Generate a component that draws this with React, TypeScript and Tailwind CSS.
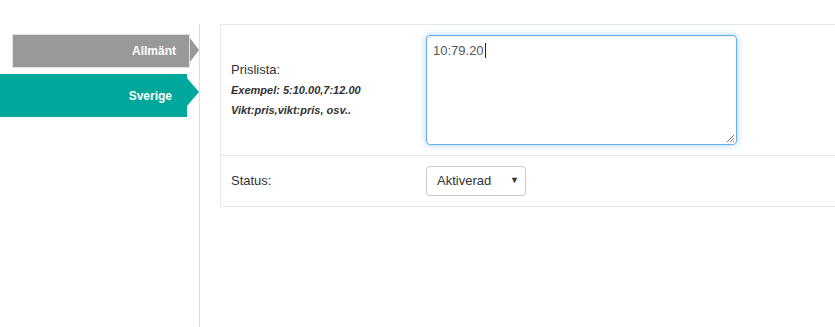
import React from "react"

function Tab({
  label,
  active,
}: {
  label: string
  active?: boolean
}) {
  if (active) {
    return (
      <div className="relative mt-[6px] flex h-[43px] w-[187px] items-center justify-end bg-[#00a89b] pr-[15px] text-[12px] font-bold text-white">
        {label}
        <span className="absolute top-[4px] left-[187px] h-0 w-0 border-y-[14px] border-l-[12px] border-y-transparent border-l-[#00a89b]" />
      </div>
    )
  }
  return (
    <div className="relative ml-[12px] flex h-[34px] w-[178px] items-center justify-end border border-[#e0e0e0] bg-[#999999] pr-[13px] text-[12px] font-bold text-white">
      {label}
      <span className="absolute top-[3px] left-[177px] h-0 w-0 border-y-[12px] border-l-[9px] border-y-transparent border-l-[#999999]" />
    </div>
  )
}

export default function App() {
  return (
    <div className="h-[327px] w-[835px] overflow-hidden bg-white font-['Liberation_Sans',Arial,sans-serif] text-[#333]">
      <div className="mt-[24px] flex h-[303px]">
        <div className="w-[200px] shrink-0 border-r border-[#dddddd] pt-[10px]">
          <Tab label="Allmänt" />
          <Tab label="Sverige" active />
        </div>

        <div className="ml-[20px] flex-1 self-start border-y border-l border-[#e7e7e7]">
          <div className="flex border-b border-[#e7e7e7]">
            <div className="flex w-[205px] shrink-0 flex-col justify-center pl-[10px]">
              <div className="text-[13px] leading-[20px]">Prislista:</div>
              <div className="text-[11px] leading-[20px] font-bold italic">
                Exempel: 5:10.00,7:12.00
              </div>
              <div className="text-[11px] leading-[20px] font-bold italic">
                Vikt:pris,vikt:pris, osv..
              </div>
            </div>
            <div className="py-[10px]">
              <div className="relative h-[110px] w-[311px] rounded-[4px] border border-[#66afe9] px-[6px] py-[4px] text-[13px] leading-[20px] text-[#555] shadow-[inset_0_1px_1px_rgba(0,0,0,0.075),0_0_6px_rgba(102,175,233,0.6)]">
                10:79.20
                <span className="ml-[1px] inline-block h-[15px] w-[1px] translate-y-[3px] bg-[#222]" />
                <svg
                  viewBox="0 0 10 10"
                  className="absolute right-[1px] bottom-[1px] h-[10px] w-[10px]"
                >
                  <path d="M9 2 L2 9 M9 5 L5 9 M9 8 L8 9" stroke="#777" strokeWidth="1" />
                </svg>
              </div>
            </div>
          </div>

          <div className="flex">
            <div className="flex w-[205px] shrink-0 items-center pl-[10px] text-[13px]">
              Status:
            </div>
            <div className="py-[10px]">
              <div className="flex h-[30px] w-[100px] items-center justify-between rounded-[4px] border border-[#cccccc] pr-[6px] pl-[10px] text-[13px] text-[#333]">
                Aktiverad
                <span className="text-[9px] text-[#333]">▼</span>
              </div>
            </div>
          </div>
        </div>
      </div>
    </div>
  )
}
